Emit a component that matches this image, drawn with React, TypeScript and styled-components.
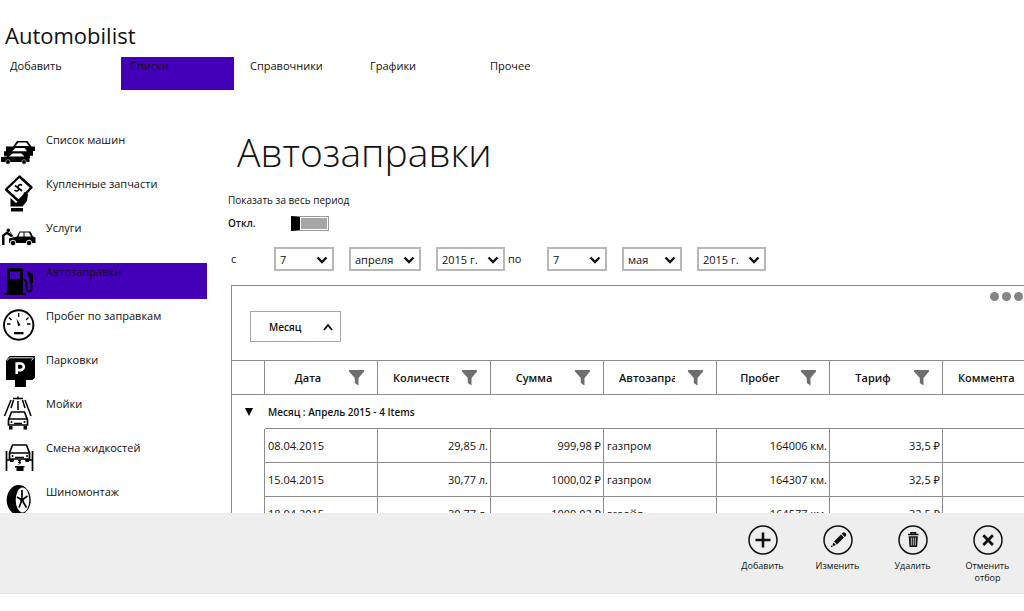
import React from "react";
import styled, { createGlobalStyle, css } from "styled-components";

const GlobalStyle = createGlobalStyle`
  *, *::before, *::after { box-sizing: border-box; }
  body { margin: 0; background: #fff; color: #111; font-family: "Open Sans", "Noto Sans", sans-serif; font-size: 11px; line-height: 16px; }
  button, select, input { font: inherit; color: inherit; }
`;

const accent = "#4400b8";
const line = "#8c8c8c";

const Page = styled.div`
  display: flex;
  flex-direction: column;
  height: 100vh;
  padding-bottom: 17px;
`;

const Header = styled.header`
  flex: none;
  padding-top: 21px;
`;

const Brand = styled.div`
  padding-left: 5px;
  font-size: 22px;
  line-height: 28px;
`;

const TopNav = styled.nav`
  display: flex;
  gap: 7px;
  margin-top: 8px;
  padding-left: 1px;
`;

const TopLink = styled.a<{ $active?: boolean }>`
  width: 113px;
  height: 33px;
  padding: 1px 9px;
  color: inherit;
  text-decoration: none;
  background: ${(p) => (p.$active ? accent : "transparent")};
`;

const Body = styled.div`
  flex: 1;
  min-height: 0;
  display: flex;
  overflow: hidden;
`;

const Sidebar = styled.nav`
  flex: none;
  display: flex;
  flex-direction: column;
  gap: 8px;
  width: 207px;
  padding-top: 41px;
`;

const SideLink = styled.a<{ $active?: boolean }>`
  flex: none;
  display: flex;
  gap: 10px;
  height: 36px;
  color: inherit;
  text-decoration: none;
  background: ${(p) => (p.$active ? accent : "transparent")};

  svg { flex: none; width: 36px; height: 36px; overflow: visible; }
`;

const SideLabel = styled.span`
  padding-top: 1px;
`;

const Main = styled.main`
  flex: 1;
  min-width: 0;
  padding: 37px 0 0 21px;
`;

const Title = styled.h1`
  margin: 0;
  padding-left: 9px;
  font-size: 39px;
  line-height: 50px;
  font-weight: 300;
`;

const FieldLabel = styled.label`
  display: block;
  margin-top: 15px;
  font-size: 10px;
`;

const ToggleRow = styled.div`
  display: flex;
  align-items: center;
  height: 16px;
  margin-top: 7px;
  font-size: 10px;
  font-weight: 600;
`;

const ToggleState = styled.span`
  width: 63px;
`;

const Toggle = styled.input`
  appearance: none;
  width: 38px;
  height: 15px;
  margin: 0;
  border: 1px solid #999;
  border-left: 9px solid #000;
  padding: 1px;
  background: #a6a6a6 content-box;
`;

const Period = styled.div`
  display: flex;
  align-items: center;
  gap: 15px;
  margin-top: 16px;
`;

const PeriodWord = styled.span<{ $wide?: boolean }>`
  width: 31px;
  padding-left: 3px;
  ${(p) => p.$wide && css`width: 27px; margin-left: -15px;`}
`;

const SelectBox = styled.span<{ $w: number }>`
  position: relative;
  width: ${(p) => p.$w}px;

  svg { position: absolute; right: 6px; top: 9px; pointer-events: none; }
`;

const SelectField = styled.select`
  appearance: none;
  display: block;
  width: 100%;
  height: 24px;
  padding: 1px 4px 0;
  border: 2px solid #b8b8b8;
  border-radius: 0;
  background: #fff;
`;

const Panel = styled.section`
  margin: 14px 0 0 3px;
  border: 1px solid ${line};
  border-width: 1px 0 0 1px;
  overflow: hidden;
`;

const GroupBar = styled.div`
  display: flex;
  justify-content: space-between;
  align-items: flex-start;
  height: 75px;
  border-bottom: 1px solid ${line};
`;

const GroupChip = styled.button`
  display: flex;
  align-items: center;
  justify-content: space-between;
  width: 91px;
  height: 31px;
  margin: 25px 0 0 18px;
  padding: 0 6px 0 18px;
  border: 1px solid #a6a6a6;
  background: #fff;
  font-size: 10px;
  font-weight: 600;
`;

const MoreButton = styled.button`
  display: flex;
  gap: 3px;
  padding: 6px 1px;
  border: 0;
  background: none;
`;

const Dot = styled.span`
  width: 9px;
  height: 9px;
  border-radius: 50%;
  background: #858585;
`;

const Grid = styled.table`
  width: 824px;
  table-layout: fixed;
  border-spacing: 0;
`;

const GutterCol = styled.col`
  width: 33px;
`;

const HeadCell = styled.th`
  height: 34px;
  padding: 0;
  border: 1px solid ${line};
  border-width: 0 1px 1px 0;
  font-weight: 600;
`;

const HeadInner = styled.div`
  display: flex;
  align-items: center;
  justify-content: space-between;
  padding: 0 13px 0 15px;
`;

const HeadText = styled.span`
  display: flex;
  width: 56px;
  overflow: hidden;
  white-space: nowrap;

  &::before, &::after { content: ""; flex: 1; }
`;

const Gutter = styled.td<{ $lined?: boolean }>`
  padding: 0;
  text-align: center;
  border-right: ${(p) => (p.$lined ? `1px solid ${line}` : "0")};

  button { display: block; margin: 0 auto; padding: 2px; border: 0; background: none; }
  svg { display: block; }
`;

const GroupCell = styled.td`
  height: 34px;
  padding: 0 3px;
  border-bottom: 1px solid ${line};
  font-size: 10px;
  font-weight: 600;
`;

const Cell = styled.td<{ $right?: boolean }>`
  height: 34px;
  padding: 1px 2px 0 3px;
  border: 1px solid ${line};
  border-width: 0 1px 1px 0;
  text-align: ${(p) => (p.$right ? "right" : "left")};
  white-space: nowrap;
`;

const AppBar = styled.footer`
  flex: none;
  display: flex;
  justify-content: flex-end;
  gap: 4px;
  height: 81px;
  padding: 12px 1px 0;
  background: #eee;
  border-bottom: 1px solid #e6e6e6;
`;

const BarButton = styled.button`
  display: flex;
  flex-direction: column;
  align-items: center;
  gap: 5px;
  width: 71px;
  height: 60px;
  padding: 0 8px;
  border: 0;
  background: none;
  font-size: 9px;
  line-height: 12px;

  svg { flex: none; }
`;

const Chevron = ({ up = false }: { up?: boolean }) => (
  <svg width="12" height="8" viewBox="0 0 12 8" fill="none" stroke="#111" strokeWidth={up ? 1.9 : 2.4} aria-hidden="true">
    <path d={up ? "M2 7 6 2l4 5" : "M1.5 1.5 6 6l4.5-4.5"} />
  </svg>
);

const Funnel = () => (
  <svg width="15" height="16" viewBox="0 0 15 16" fill="#6e6e6e" aria-hidden="true">
    <path d="M0 0h15v1.5L9.5 8v7.5L5.8 13V8L0 1.5z" />
  </svg>
);

const icons = {
  cars: (
    <>
      <path d="M6 15.5h7L17 10h10.500l4 5.500H35V20h-4v2.500H6z" fill="#000" />
      <path d="M15.500 15 18.300 11.500h8L29 15z" fill="#fff" />
      <path d="M4 20.300h6l5-5h11l3.500 4.500H33v5h-3V27H4z" fill="#000" />
      <path d="M12 20.300 15.500 17h9l2.500 3.300z" fill="#fff" />
      <path d="M1 26h5.500l4.500-4.800h11.500L27 26h2.500v5H1z" fill="#000" />
      <path d="M9 25.500l3.500-3h9l3 3z" fill="#fff" />
      <path d="M1 25.300h6" stroke="#fff" strokeWidth=".7" />
      <circle cx="8" cy="31" r="2.300" fill="#000" stroke="#fff" strokeWidth=".5" />
      <circle cx="24" cy="31" r="2.300" fill="#000" stroke="#fff" strokeWidth=".5" />
    </>
  ),
  parts: (
    <>
      <path d="M19.500 1.500 31.500 12.500 18.500 26 6 14.500z" fill="#fff" stroke="#000" strokeWidth="2.400" strokeLinejoin="round" />
      <path d="M22 10.500c-2-2-5 .3-3.500 2.200 1.300 1.500-1.200 4.800-4 2.300M15 10.500l7 5.500" fill="none" stroke="#000" strokeWidth="1.600" />
      <path d="M10.500 23 16 28l7-6 1-5 4 2-1 7-4.500 5.500h-12z" fill="#000" />
      <path d="M11 33h12v3.500H11z" fill="#000" />
    </>
  ),
  service: (
    <>
      <circle cx="8.300" cy="11.300" r="1.700" fill="#000" />
      <path d="M3.300 26V16.500L7 13.800l5 3.500" fill="none" stroke="#000" strokeWidth="2.400" />
      <path d="M10 12.500l3.500 6" stroke="#000" fill="none" strokeWidth=".8" />
      <path d="M9 19.500l8-2 2.500-5h11l2.500 5 2.500 1V24H9z" fill="#000" />
      <path d="M18.500 17.500l1.500-4h3.500v4zM24.500 17.500v-4H29l2 4z" fill="#fff" />
      <circle cx="13" cy="24" r="2.800" fill="#000" stroke="#fff" strokeWidth=".9" />
      <circle cx="29" cy="24" r="2.800" fill="#000" stroke="#fff" strokeWidth=".9" />
    </>
  ),
  fuel: (
    <>
      <path fillRule="evenodd" d="M7 7.500Q7 5 9.500 5h11Q23 5 23 7.500V30h3v2H4v-2h3zM10 8.500V16h10V8.500z" fill="#000" />
      <path d="M23.500 16.500c5-.5 1 12 5 12s3.500-4 2.500-9" fill="none" stroke="#000" strokeWidth="1.800" />
      <path d="M26.500 7 33 11.500V20h-3.500l-.5-6z" fill="#000" />
    </>
  ),
  gauge: (
    <>
      <circle cx="18.700" cy="18" r="14.700" fill="#fff" stroke="#000" strokeWidth="1.900" />
      <path d="M18.700 6v4M9 10.500l2.500 2.500M28.500 10.500 26 13M7 17h3.500M27 17h3.500" stroke="#000" strokeWidth="1.300" fill="none" />
      <path d="M16.500 11.500 20.500 18l-2.300 1.500z" fill="#000" />
      <path d="M14 25h9.500v2.300H14z" fill="#000" />
    </>
  ),
  parking: (
    <>
      <path d="M6 9.500 9.500 5H35v21.500L32.500 29H26v7H15v-7H6z" fill="#000" />
      <path d="M7 9.500 9.800 6.800H33M31.500 9.500 34 6.500" stroke="#fff" strokeWidth=".9" fill="none" />
      <path d="M16.700 23V12.500h3.800a3.300 3.300 0 0 1 0 6.600h-3.500" fill="none" stroke="#fff" strokeWidth="2.600" />
    </>
  ),
  wash: (
    <>
      <path d="M13 3.500h10M18 1.500v3M13.500 5 11 13M11 5 4.500 21M18 6v9M22.500 5 25 13M25 5l6 16" fill="none" stroke="#000" strokeWidth="1.500" />
      <path d="M11.500 17h13l3 8v5H8.500v-5z" fill="#fff" stroke="#000" strokeWidth="1.700" />
      <path d="M8 24h20M14 28.500h8" stroke="#000" strokeWidth="1.500" />
      <path d="M9 31h3.500v3.500H9zM23.500 31H27v3.500h-3.500z" fill="#000" />
      <circle cx="11.500" cy="27" r="1" fill="#000" />
      <circle cx="24.500" cy="27" r="1" fill="#000" />
    </>
  ),
  fluids: (
    <>
      <path d="M12.500 6h14l3 8v6H9.500v-6z" fill="#fff" stroke="#000" strokeWidth="1.700" />
      <path d="M9 14h21M15 18.500h9M6.500 12v20M32.500 12v20M6 21h8M25 21h8" stroke="#000" strokeWidth="1.700" />
      <path d="M10 20h3.500v3H10zM25.500 20H29v3h-3.500zM15 27h9.500v1.500h-1V32h-7v-3.500H15z" fill="#000" />
      <path d="M18 21.500h3l-3 2h3l-2.500 2" fill="none" stroke="#000" />
      <circle cx="12.500" cy="17" r="1" fill="#000" />
      <circle cx="27" cy="17" r="1" fill="#000" />
    </>
  ),
  tyre: (
    <>
      <ellipse cx="18.700" cy="17" rx="12" ry="15" fill="#000" />
      <ellipse cx="22.500" cy="17" rx="6.800" ry="12.500" fill="#fff" />
      <path d="M22 17V7M22 17l5.500-4M22 17l4.500 7.500M22 17l-3 7.500M22 17l-5-3" stroke="#000" strokeWidth="1.700" />
      <circle cx="22" cy="17" r="2" fill="#000" />
    </>
  ),
};

const sections: { label: string; icon: keyof typeof icons }[] = [
  { label: "Список машин", icon: "cars" },
  { label: "Купленные запчасти", icon: "parts" },
  { label: "Услуги", icon: "service" },
  { label: "Автозаправки", icon: "fuel" },
  { label: "Пробег по заправкам", icon: "gauge" },
  { label: "Парковки", icon: "parking" },
  { label: "Мойки", icon: "wash" },
  { label: "Смена жидкостей", icon: "fluids" },
  { label: "Шиномонтаж", icon: "tyre" },
];

const columns = ["Дата", "Количество", "Сумма", "Автозаправка", "Пробег", "Тариф", "Комментарий"];

const rows = [
  ["08.04.2015", "29,85 л.", "999,98 ₽", "газпром", "164006 км.", "33,5 ₽", ""],
  ["15.04.2015", "30,77 л.", "1000,02 ₽", "газпром", "164307 км.", "32,5 ₽", ""],
  ["18.04.2015", "30,77 л.", "1000,02 ₽", "газойл", "164577 км.", "32,5 ₽", ""],
];

const rightAligned = [1, 2, 4, 5];

const actions = [
  { label: "Добавить", glyph: <path d="M15 7.500v15M7.500 15h15" stroke="#111" strokeWidth="2.600" /> },
  {
    label: "Изменить",
    glyph: (
      <>
        <path d="M11 16.500 18 9.500l3 3-7 7z" fill="#111" />
        <path d="M18.700 8.800l1-1a1.600 1.600 0 0 1 2.300 0l.8.800a1.600 1.600 0 0 1 0 2.300l-1 1z" fill="#111" />
        <path d="M10.500 17.500l2.500 2.500-2.500 1-1-1z" fill="#111" />
        <circle cx="8.800" cy="21.300" r=".9" fill="#111" />
      </>
    ),
  },
  {
    label: "Удалить",
    glyph: (
      <>
        <path d="M10 9.500h10.500M13 9V7.700h4.500V9" stroke="#111" strokeWidth="1.500" fill="none" />
        <path d="M10.700 11.300h9.200l-.8 10.700h-7.600z" fill="#111" />
        <path d="M13.300 12.500v8M15.300 12.500v8M17.300 12.500v8" stroke="#eee" strokeWidth=".8" />
      </>
    ),
  },
  { label: "Отменить отбор", glyph: <path d="M10.300 10.300l9.600 9.600M19.900 10.300l-9.600 9.600" stroke="#111" strokeWidth="2.800" /> },
];

const Drop = ({ label, value, width }: { label: string; value: string; width: number }) => (
  <SelectBox $w={width}>
    <SelectField aria-label={label} defaultValue={value}>
      <option>{value}</option>
    </SelectField>
    <Chevron />
  </SelectBox>
);

export default function App() {
  return (
    <Page>
      <GlobalStyle />
      <Header>
        <Brand>Automobilist</Brand>
        <TopNav>
          {["Добавить", "Списки", "Справочники", "Графики", "Прочее"].map((item) => (
            <TopLink key={item} href="#" $active={item === "Списки"}>{item}</TopLink>
          ))}
        </TopNav>
      </Header>
      <Body>
        <Sidebar>
          {sections.map(({ label, icon }) => (
            <SideLink key={label} href="#" $active={icon === "fuel"}>
              <svg viewBox="0 0 36 36" aria-hidden="true">{icons[icon]}</svg>
              <SideLabel>{label}</SideLabel>
            </SideLink>
          ))}
        </Sidebar>
        <Main>
          <Title>Автозаправки</Title>
          <FieldLabel htmlFor="whole-period">Показать за весь период</FieldLabel>
          <ToggleRow>
            <ToggleState>Откл.</ToggleState>
            <Toggle id="whole-period" type="checkbox" role="switch" />
          </ToggleRow>
          <Period>
            <PeriodWord>с</PeriodWord>
            <Drop label="День начала" value="7" width={60} />
            <Drop label="Месяц начала" value="апреля" width={72} />
            <Drop label="Год начала" value="2015 г." width={69} />
            <PeriodWord $wide>по</PeriodWord>
            <Drop label="День конца" value="7" width={60} />
            <Drop label="Месяц конца" value="мая" width={60} />
            <Drop label="Год конца" value="2015 г." width={69} />
          </Period>
          <Panel>
            <GroupBar>
              <GroupChip>Месяц <Chevron up /></GroupChip>
              <MoreButton aria-label="Ещё"><Dot /><Dot /><Dot /></MoreButton>
            </GroupBar>
            <Grid>
              <colgroup>
                <GutterCol />
                {columns.map((c) => <col key={c} />)}
              </colgroup>
              <thead>
                <tr>
                  <HeadCell aria-label="Группа" />
                  {columns.map((c) => (
                    <HeadCell key={c} scope="col">
                      <HeadInner><HeadText>{c}</HeadText><Funnel /></HeadInner>
                    </HeadCell>
                  ))}
                </tr>
              </thead>
              <tbody>
                <tr>
                  <Gutter>
                    <button aria-label="Свернуть группу">
                      <svg width="8" height="8" viewBox="0 0 8 8"><path d="M0 0h8L4 8z" fill="#000" /></svg>
                    </button>
                  </Gutter>
                  <GroupCell colSpan={7}>Месяц : Апрель 2015 - 4 Items</GroupCell>
                </tr>
                {rows.map((row) => (
                  <tr key={row[0]}>
                    <Gutter $lined />
                    {row.map((value, i) => (
                      <Cell key={columns[i]} $right={rightAligned.includes(i)}>{value}</Cell>
                    ))}
                  </tr>
                ))}
              </tbody>
            </Grid>
          </Panel>
        </Main>
      </Body>
      <AppBar>
        {actions.map(({ label, glyph }) => (
          <BarButton key={label}>
            <svg width="30" height="30" viewBox="0 0 30 30" fill="none" aria-hidden="true">
              <circle cx="15" cy="15" r="14" stroke="#111" strokeWidth="1.500" />
              {glyph}
            </svg>
            {label}
          </BarButton>
        ))}
      </AppBar>
    </Page>
  );
}
